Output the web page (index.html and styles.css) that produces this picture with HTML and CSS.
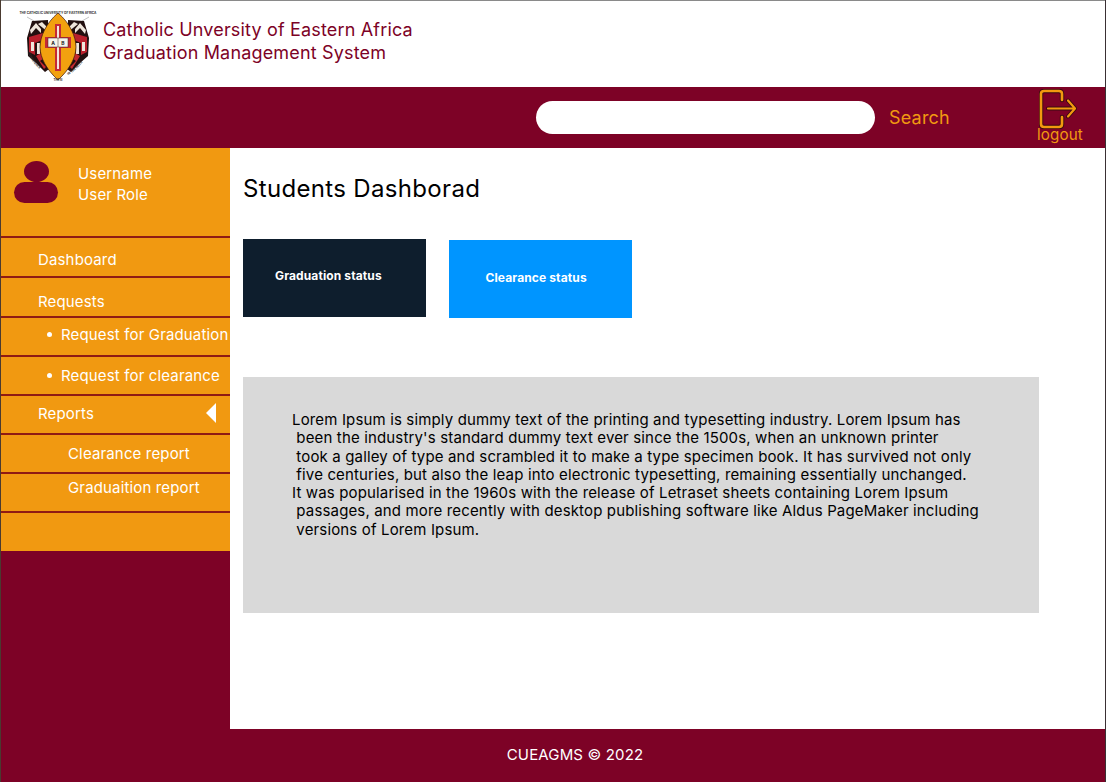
FILE: index.html
```html
<!DOCTYPE html>
<html lang="en">
  <head>
    <meta charset="utf-8">
    <meta name="viewport" content="width=device-width">
    <title>Graduation Management System</title>
    <link rel="stylesheet" href="styles.css">
  </head>
  <body>
    <header class="brand">
      <svg class="logo" width="80" height="74" viewBox="0 0 80 74">
        <defs>
          <g id="wing">
            <path d="M15 12 L31 11 L32 60 L28 63 L19 54 L11 47 L10 29 Z" fill="#221010"/>
            <path d="M13 21 L19 14 L24 20 L24 24 L19 19 L14 25 Z M21 15 L25 13 L31 19 L31 23 Z" fill="#efe6dc"/>
            <path d="M12 28 L26 24 L28 30 L18 34 L18 46 L12 43 Z" fill="#b8202c"/>
            <path d="M14 33 h3 v9 h-3 Z M20 34 h3 v11 h-3 Z" fill="#efe6dc"/>
            <path d="M19 47 L31 40 L31 46 L23 52 L29 58 L27 60 Z" fill="#c42a30"/>
            <path d="M26 30 h5 v6 h-5 Z" fill="#efe6dc"/>
          </g>
          <path id="arc-left" d="M11 44 Q17 58 31 66"/>
          <path id="arc-right" d="M51 66 Q65 58 71 44"/>
        </defs>
        <text class="logo-text" x="41" y="5" text-anchor="middle" textLength="77" lengthAdjust="spacingAndGlyphs">THE CATHOLIC UNIVERSITY OF EASTERN AFRICA</text>
        <path d="M10 8 L17 12 M72 8 L65 12" stroke="#999" stroke-width=".6"/>
        <use href="#wing"/>
        <use href="#wing" transform="translate(82 0) scale(-1 1)"/>
        <path d="M41 4 C53 14 59 28 59 38 C59 49 52 61 41 71 C30 61 23 49 23 38 C23 28 29 14 41 4 Z" fill="#f2a10f" stroke="#3a1510" stroke-width=".7"/>
        <path d="M38 15 h6 v13 h10 v11 h-10 v23 h-6 v-23 h-10 v-11 h10 Z" fill="#c42a36"/>
        <path d="M40 17 h2 v43 h-2 Z" fill="#f3e7dd"/>
        <rect x="31" y="29" width="20" height="9" fill="#f6f3ec" stroke="#3a2520" stroke-width=".5"/>
        <path d="M41 29 v9" stroke="#3a2520" stroke-width=".5"/>
        <text class="logo-book" x="36" y="35.500" text-anchor="middle">A</text>
        <text class="logo-book" x="46" y="35.500" text-anchor="middle">B</text>
        <text class="logo-text"><textPath href="#arc-left">CONSCIENCE</textPath></text>
        <text class="logo-text"><textPath href="#arc-right">IN THE FAITH</textPath></text>
        <text class="logo-text" x="41" y="72" text-anchor="middle">THESI</text>
      </svg>
      <div class="brand-name">
        <div>Catholic Unversity of Eastern Africa</div>
        <div>Graduation Management System</div>
      </div>
    </header>

    <div class="topbar">
      <form class="search">
        <input type="text" class="search-input">
        <span class="search-label">Search</span>
      </form>
      <a class="logout">
        <svg width="38" height="40" viewBox="0 0 38 40">
          <path d="M23 11 V5 Q23 2 20 2 H5 Q2 2 2 5 V35 Q2 38 5 38 H20 Q23 38 23 35 V28" fill="none" stroke="#3a0a10" stroke-width="4.400" stroke-linecap="round"/>
          <path d="M9 19.500 H36 M29 11.500 L36 19.500 L29 27.500" fill="none" stroke="#3a0a10" stroke-width="4" stroke-linecap="round" stroke-linejoin="round"/>
          <path d="M23 11 V5 Q23 2 20 2 H5 Q2 2 2 5 V35 Q2 38 5 38 H20 Q23 38 23 35 V28" fill="none" stroke="#f2990f" stroke-width="2.600" stroke-linecap="round"/>
          <path d="M9 19.500 H36 M29 11.500 L36 19.500 L29 27.500" fill="none" stroke="#f2990f" stroke-width="2.200" stroke-linecap="round" stroke-linejoin="round"/>
        </svg>
        <span>logout</span>
      </a>
    </div>

    <div class="middle">
      <aside class="sidebar">
        <div class="profile">
          <div class="avatar">
            <div class="avatar-head"></div>
            <div class="avatar-body"></div>
          </div>
          <div class="profile-text">
            <div>Username</div>
            <div>User Role</div>
          </div>
        </div>
        <nav class="menu">
          <a class="menu-item dash">Dashboard</a>
          <a class="menu-item req">Requests</a>
          <a class="menu-item sub high">Request for Graduation</a>
          <a class="menu-item sub">Request for clearance</a>
          <a class="menu-item open">Reports</a>
          <a class="menu-item report">Clearance report</a>
          <a class="menu-item report higher">Graduaition report</a>
          <a class="menu-item last"></a>
        </nav>
      </aside>

      <main class="content">
        <h1>Students Dashborad</h1>
        <section class="cards">
          <div class="card card-dark">Graduation status</div>
          <div class="card card-blue">Clearance status</div>
        </section>
        <section class="lorem">
<p>Lorem Ipsum is simply dummy text of the printing and typesetting industry. Lorem Ipsum has
 been the industry's standard dummy text ever since the 1500s, when an unknown printer
 took a galley of type and scrambled it to make a type specimen book. It has survived not only
 five centuries, but also the leap into electronic typesetting, remaining essentially unchanged.
It was popularised in the 1960s with the release of Letraset sheets containing Lorem Ipsum
 passages, and more recently with desktop publishing software like Aldus PageMaker including
 versions of Lorem Ipsum.</p>
        </section>
      </main>
    </div>

    <footer class="footer">CUEAGMS © 2022</footer>
  </body>
</html>
```

FILE: styles.css
```css
* {
    box-sizing: border-box;
}
html, body {
    height: 100%;
}
body {
    margin: 0;
    font: 15px/20px Inter, "Noto Sans", sans-serif;
    letter-spacing: .15px;
    display: flex;
    flex-direction: column;
    background: #fff;
    border-left: 1px solid #4a3a30;
    border-right: 1px solid #3a3034;
    overflow: hidden;
}
.brand {
    height: 87px;
    display: flex;
    align-items: flex-start;
    background: #fff;
    border-top: 1px solid #8a8a8a;
    padding: 8px 0 0 16px;
}
.logo {
    flex: none;
}
.logo-text {
    font-size: 3px;
    font-weight: 700;
    letter-spacing: 0;
    fill: #333;
}
.logo-book {
    font-size: 5px;
    font-weight: 700;
    letter-spacing: 0;
    fill: #222;
}
.brand-name {
    margin: 10px 0 0 6px;
    color: #7d0226;
    font-size: 18px;
    letter-spacing: .17px;
    line-height: 22.500px;
}
.topbar {
    height: 61px;
    background: #7d0226;
    display: flex;
    justify-content: flex-end;
    align-items: flex-start;
    padding-right: 22px;
}
.search {
    display: flex;
    align-items: center;
    margin: 14px 87px 0 0;
}
.search-input {
    width: 339px;
    height: 33px;
    border: none;
    border-radius: 17px;
    background: #fff;
}
.search-label {
    margin-left: 14px;
    color: #f19911;
    font-size: 18px;
    letter-spacing: .2px;
}
.logout {
    display: flex;
    flex-direction: column;
    align-items: center;
    color: #f19911;
    padding-top: 2px;
    font-size: 15.200px;
    line-height: 18px;
}
.logout svg {
    display: block;
    margin: 0 4px -3px 0;
}
.middle {
    flex: 1;
    display: flex;
    min-height: 0;
}
.sidebar {
    width: 229px;
    background: #7d0226;
}
.profile {
    height: 90px;
    background: #f19911;
    border-bottom: 2px solid #8f1a14;
    display: flex;
    align-items: flex-start;
    padding: 13px 0 0 13px;
    color: #fff;
}
.avatar {
    width: 44px;
}
.avatar-head {
    width: 25px;
    height: 21px;
    margin: 0 auto;
    border-radius: 50%;
    background: #7d0226;
}
.avatar-body {
    height: 21px;
    border-radius: 11px;
    background: #7d0226;
}
.profile-text {
    margin: 2px 0 0 20px;
    line-height: 21px;
}
.menu {
    display: flex;
    flex-direction: column;
}
.menu-item {
    height: 39px;
    display: flex;
    align-items: center;
    padding-left: 37px;
    background: #f19911;
    border-bottom: 2px solid #8f1a14;
    color: #fff;
    white-space: nowrap;
}
.menu-item:nth-child(-n+2) {
    height: 40px;
}
.dash {
    padding-top: 5px;
}
.req {
    padding-top: 9px;
}
.sub {
    padding-left: 46px;
}
.sub::before {
    content: "";
    flex: none;
    width: 5px;
    height: 5px;
    margin-right: 9px;
    border-radius: 50%;
    background: #fff;
}
.high {
    padding-bottom: 4px;
}
.open {
    position: relative;
    padding-bottom: 2px;
}
.open::after {
    content: "";
    position: absolute;
    right: 14px;
    top: 7px;
    border-style: solid;
    border-width: 10px 10px 10px 0;
    border-color: transparent #fff transparent transparent;
}
.report {
    padding-left: 67px;
}
.higher {
    padding-bottom: 9px;
}
.last {
    height: 38px;
    border-bottom: none;
}
.content {
    flex: 1;
    padding: 26px 0 0 13px;
    background: #fff;
}
h1 {
    margin: 0;
    font-size: 24px;
    letter-spacing: .33px;
    font-weight: 400;
    line-height: 30px;
    color: #000;
}
.cards {
    display: flex;
    gap: 22.500px;
    margin-top: 35px;
}
.card {
    width: 183px;
    height: 78px;
    display: flex;
    align-items: center;
    color: #fff;
    font-size: 12px;
    letter-spacing: .12px;
    font-weight: 700;
}
.card-dark {
    background: #0e1e2d;
    padding: 0 0 4px 32px;
}
.card-blue {
    background: #0095ff;
    margin-top: 1px;
    padding: 0 0 2px 37px;
}
.lorem {
    width: 796px;
    height: 236px;
    margin-top: 59px;
    padding: 34px 0 0 49px;
    background: #d9d9d9;
}
.lorem p {
    margin: 0;
    font-size: 15px;
    line-height: 18.300px;
    white-space: pre;
    color: #000;
}
.footer {
    height: 53px;
    background: #7d0226;
    color: #fff;
    display: flex;
    align-items: center;
    justify-content: center;
    padding: 0 0 2px 44px;
}
```
